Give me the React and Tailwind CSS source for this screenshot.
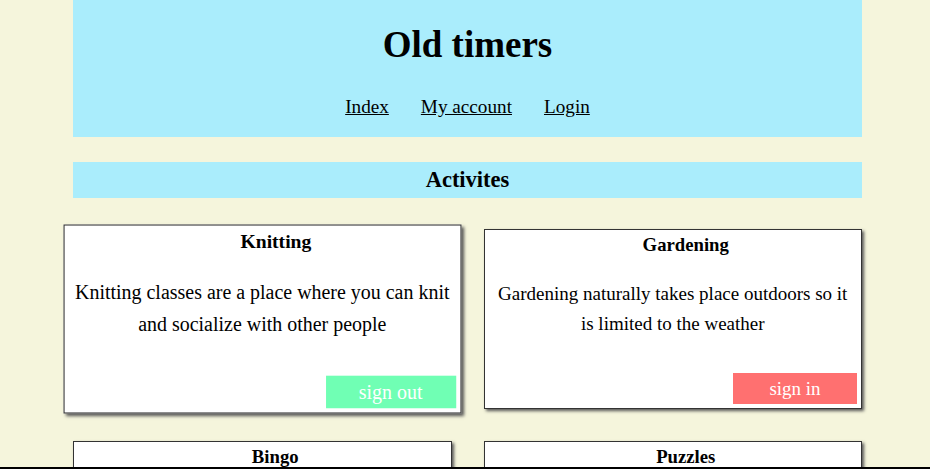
import React from 'react';

const activities = [
  {
    name: 'Knitting',
    text: 'Knitting classes are a place where you can knit and socialize with other people',
    joined: true,
  },
  {
    name: 'Gardening',
    text: 'Gardening naturally takes place outdoors so it is limited to the weather',
    joined: false,
  },
  { name: 'Bingo', text: 'Bingo nights every week with prizes for the winners', joined: false },
  { name: 'Puzzles', text: 'Work on jigsaw and crossword puzzles together', joined: false },
];

const ActivityCard = ({ item, hovered }) => (
  <div
    className={`h-[180px] bg-white border border-[#333] shadow-[2px_2px_3px_#555] flex flex-col px-2 ${
      hovered ? 'scale-105' : ''
    }`}
  >
    <h3 className="mt-[4px] pl-[26px] text-center text-[18.72px] leading-[22px] font-bold">{item.name}</h3>
    <p className="mt-[23px] text-center text-[19px] leading-[30px]">{item.text}</p>
    <div className="mt-auto mb-[4px] flex justify-end -mr-1">
      <button
        className={`w-[124px] h-[31px] text-white text-[19px] leading-[31px] ${
          item.joined ? 'bg-[#70ffb4]' : 'bg-[#ff7070]'
        }`}
      >
        {item.joined ? 'sign out' : 'sign in'}
      </button>
    </div>
  </div>
);

const App = () => {
  return (
    <div className="h-screen overflow-hidden bg-[#f5f5dc] border-b-2 border-black font-['Liberation_Serif',serif] text-black">
      <div className="ml-[73px] w-[789px]">
        {/* header */}
        <header className="h-[137px] bg-[#aaedfc] pt-[24px] flex flex-col items-center">
          <h1 className="text-[37px] leading-[42px] font-bold">Old timers</h1>
          <nav className="mt-[30px] flex gap-8 text-[19.2px] leading-[22px]">
            <a href="#" className="underline">Index</a>
            <a href="#" className="underline">My account</a>
            <a href="#" className="underline">Login</a>
          </nav>
        </header>

        <div className="mt-[25px] h-[36px] bg-[#aaedfc] flex items-center justify-center">
          <h2 className="text-[22.5px] font-bold">Activites</h2>
        </div>

        {/* activity grid */}
        <div className="mt-[31px] grid grid-cols-2 gap-8">
          {activities.map((a, i) => (
            <ActivityCard key={a.name} item={a} hovered={i === 0} />
          ))}
        </div>
      </div>
    </div>
  );
};

export default App;
